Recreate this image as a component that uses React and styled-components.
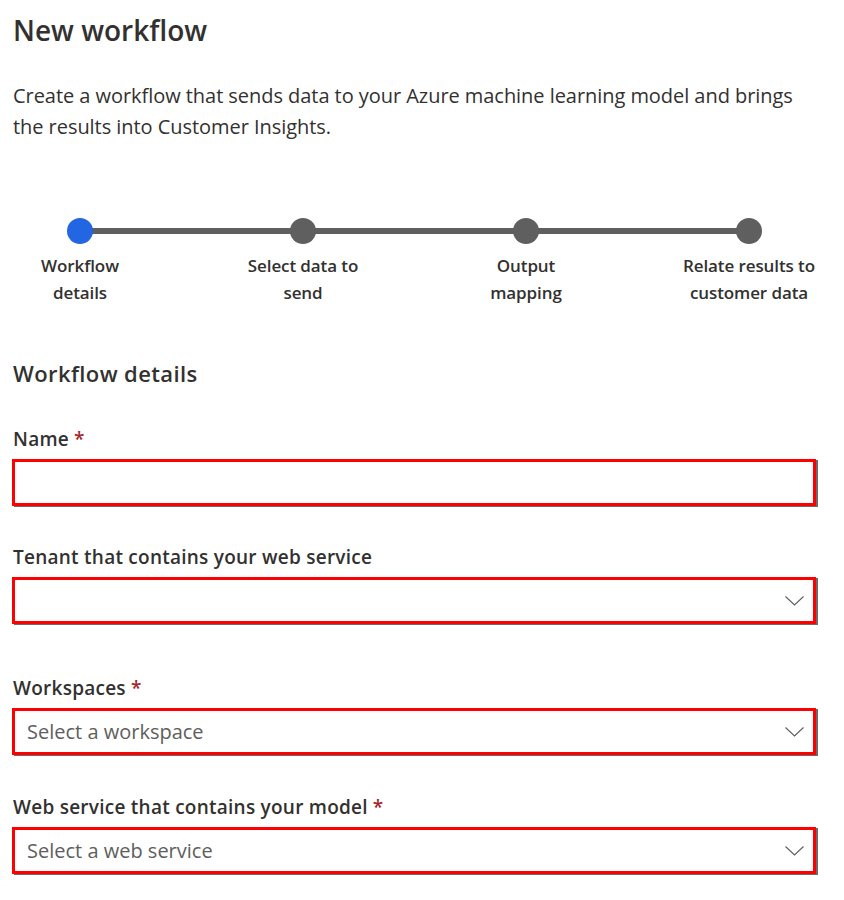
import React from 'react'
import styled, { createGlobalStyle } from 'styled-components'

const GlobalStyle = createGlobalStyle`
  body {
    margin: 0;
    background: #ffffff;
    font-family: "Segoe UI", "Open Sans", "Noto Sans", sans-serif;
    color: #323130;
  }
`

const Page = styled.main`
  width: 804px;
  padding: 12px 0 30px 12px;
`
const Title = styled.h1`
  margin: 0 0 0 1px;
  font-size: 28px;
  line-height: 36px;
  font-weight: 600;
  color: #323130;
`
const Description = styled.p`
  margin: 32px 0 0 1px;
  font-size: 20px;
  line-height: 31px;
  letter-spacing: -0.05px;
  color: #323130;
`
const Stepper = styled.ol`
  position: relative;
  list-style: none;
  margin: 76px 0 0;
  padding: 0;
  width: 809px;
  margin-left: -2px;
  display: flex;
  justify-content: space-between;

  &::before {
    content: '';
    position: absolute;
    left: 70px;
    right: 70px;
    top: 10px;
    height: 6px;
    background: #5f5f5f;
  }
`
const Step = styled.li`
  position: relative;
  width: 140px;
  display: flex;
  flex-direction: column;
  align-items: center;
`
const Dot = styled.span`
  width: 26px;
  height: 26px;
  border-radius: 50%;
  background: ${p => (p.$active ? '#2266e3' : '#5f5f5f')};
`
const StepLabel = styled.span`
  margin-top: 8px;
  font-size: 17px;
  line-height: 27px;
  font-weight: 600;
  font-stretch: 94%;
  letter-spacing: -0.1px;
  text-align: center;
  white-space: nowrap;
  color: #323130;
`
const SectionTitle = styled.h2`
  margin: 52px 0 0 1px;
  font-size: 22px;
  line-height: 30px;
  font-weight: 600;
  font-stretch: 95%;
  letter-spacing: 0.4px;
  color: #323130;
`
const Field = styled.div`
  margin-top: ${p => p.$gap}px;
`
const Label = styled.label`
  display: block;
  margin-left: 1px;
  padding-top: 2px;
  font-size: 19px;
  line-height: 26px;
  font-weight: 600;
  letter-spacing: 0.25px;
  color: #323130;
`
const Required = styled.span`
  color: #a4262c;
  margin-left: 5px;
`
const Control = styled.div`
  box-sizing: border-box;
  margin-top: 7px;
  height: 47px;
  border: 3px solid #ff0000;
  box-shadow: 2px 1px 0 #6b6b6b;
  display: flex;
  align-items: center;
  justify-content: space-between;
  padding: 0 9px 0 12px;
  background: #fff;
`
const Placeholder = styled.span`
  font-size: 20px;
  color: #605e5c;
`
const Chevron = () => (
  <svg width="19" height="10" viewBox="0 0 19 10" fill="none">
    <path d="M0.5 0.5 L9.5 9 L18.5 0.5" stroke="#605e5c" strokeWidth="1.1" />
  </svg>
)

const steps = [
  ['Workflow', 'details'],
  ['Select data to', 'send'],
  ['Output', 'mapping'],
  ['Relate results to', 'customer data']
]

const fields = [
  { label: 'Name', required: true, gap: 36, select: false },
  { label: 'Tenant that contains your web service', gap: 36, select: true },
  { label: 'Workspaces', required: true, gap: 49, select: true, placeholder: 'Select a workspace' },
  { label: 'Web service that contains your model', required: true, gap: 37, select: true, placeholder: 'Select a web service' }
]

export default function App () {
  return (
    <Page>
      <GlobalStyle />
      <Title>New workflow</Title>
      <Description>
        Create a workflow that sends data to your Azure machine learning model and brings
        <br />
        the results into Customer Insights.
      </Description>

      <Stepper>
        {steps.map((s, i) => (
          <Step key={i}>
            <Dot $active={i === 0} />
            <StepLabel>{s[0]}<br />{s[1]}</StepLabel>
          </Step>
        ))}
      </Stepper>

      <SectionTitle>Workflow details</SectionTitle>

      {fields.map(f => (
        <Field key={f.label} $gap={f.gap}>
          <Label>
            {f.label}
            {f.required && <Required>*</Required>}
          </Label>
          <Control>
            <Placeholder>{f.placeholder}</Placeholder>
            {f.select && <Chevron />}
          </Control>
        </Field>
      ))}
    </Page>
  )
}
